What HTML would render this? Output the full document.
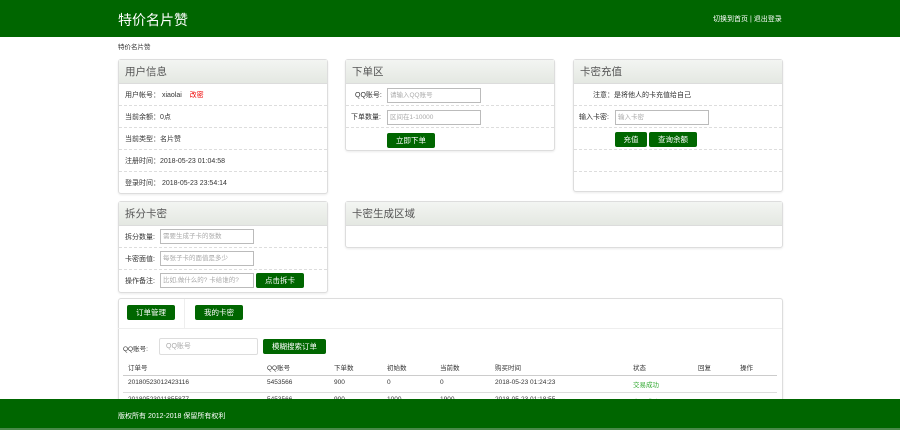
<!DOCTYPE html><html><head><meta charset="utf-8"><style>
*{box-sizing:border-box;margin:0;padding:0}
body{width:900px;height:430px;overflow:hidden;background:#fff;font-family:"Liberation Sans","Noto Sans CJK SC",sans-serif;font-size:7px;color:#333;position:relative}
.a{position:absolute}
.hd{left:0;top:0;width:900px;height:37px;background:#006600}
.p{position:absolute;border:1px solid #ddd;border-radius:3px;box-shadow:0 1px 2px rgba(0,0,0,.08);background:#fff}
.ph{height:24px;background:linear-gradient(#f3f5f2,#e4e8e2);border-bottom:1px solid #dcdcdc;font-size:10.5px;color:#555;padding:6px 6px;line-height:12px}
.r{height:22px;border-bottom:1px dashed #ddd;line-height:23px;padding-left:6px;position:relative;white-space:nowrap}
.in{position:absolute;height:15px;border:1px solid #bbb;color:#aaa;font-size:6.5px;line-height:13px;padding-left:2px;background:#fff}
.b{position:absolute;background:#006600;color:#fff;border-radius:2px;text-align:center;font-size:7.5px;line-height:15px;height:15px}
.t{position:absolute;font-size:6.5px}
</style></head><body>
<div class="a hd"></div>
<div class="a" style="left:118px;top:10px;color:#fff;font-size:14px;line-height:20px">特价名片赞</div>
<div class="a" style="left:713px;top:14px;color:#fff;font-size:7px">切换到首页 | 退出登录</div>
<div class="a" style="left:118px;top:41px;font-size:6.5px">特价名片赞</div>

<div class="p" style="left:118px;top:59px;width:210px;height:135px">
<div class="ph">用户信息</div>
<div class="r">用户帐号：&nbsp;xiaolai&nbsp;&nbsp;&nbsp;&nbsp;<span style="color:#e00">改密</span></div>
<div class="r">当前余额：0点</div>
<div class="r">当前类型：名片赞</div>
<div class="r">注册时间：2018-05-23 01:04:58</div>
<div class="r" style="border:0">登录时间：&nbsp;2018-05-23 23:54:14</div>
</div>

<div class="p" style="left:345px;top:59px;width:210px;height:92px">
<div class="ph">下单区</div>
<div class="r" style="padding-left:9px">QQ账号:<div class="in" style="left:41px;top:4px;width:94px">请输入QQ账号</div></div>
<div class="r" style="padding-left:5px">下单数量:<div class="in" style="left:41px;top:4px;width:94px">区间在1-10000</div></div>
<div class="b" style="left:41px;top:73px;width:48px">立即下单</div>
</div>

<div class="p" style="left:573px;top:59px;width:210px;height:133px">
<div class="ph">卡密充值</div>
<div class="r" style="padding-left:19px">注意：是将他人的卡充值给自己</div>
<div class="r" style="padding-left:5px">输入卡密:<div class="in" style="left:41px;top:4px;width:94px">输入卡密</div></div>
<div class="r"><div class="b" style="left:41px;top:4px;width:32px">充值</div><div class="b" style="left:75px;top:4px;width:48px">查询余额</div></div>
<div class="r"></div>
</div>

<div class="p" style="left:118px;top:201px;width:210px;height:92px">
<div class="ph">拆分卡密</div>
<div class="r">拆分数量:<div class="in" style="left:41px;top:3px;width:94px">需要生成子卡的张数</div></div>
<div class="r">卡密面值:<div class="in" style="left:41px;top:3px;width:94px">每张子卡的面值是多少</div></div>
<div class="r" style="border:0">操作备注:<div class="in" style="left:41px;top:3px;width:94px">比如,做什么的? 卡给谁的?</div><div class="b" style="left:137px;top:3px;width:48px">点击拆卡</div></div>
</div>

<div class="p" style="left:345px;top:201px;width:438px;height:47px">
<div class="ph">卡密生成区域</div>
</div>

<div class="p" style="left:118px;top:298px;width:665px;height:110px;border-bottom:0"></div>
<div class="a" style="left:118px;top:328px;width:664px;border-top:1px solid #eee"></div>
<div class="a" style="left:184px;top:299px;width:1px;height:29px;background:#eee"></div>
<div class="b" style="left:127px;top:305px;width:48px">订单管理</div>
<div class="b" style="left:195px;top:305px;width:48px">我的卡密</div>
<div class="t" style="left:123px;top:343px">QQ账号:</div>
<div class="in" style="left:159px;top:338px;width:99px;height:17px;border-color:#ddd;border-radius:2px;font-size:7px;line-height:15px;padding-left:6px">QQ账号</div>
<div class="b" style="left:263px;top:339px;width:63px">模糊搜索订单</div>
<div class="t" style="left:128px;top:362px">订单号</div><div class="t" style="left:267px;top:362px">QQ账号</div><div class="t" style="left:334px;top:362px">下单数</div><div class="t" style="left:387px;top:362px">初始数</div><div class="t" style="left:440px;top:362px">当前数</div><div class="t" style="left:495px;top:362px">购买时间</div><div class="t" style="left:633px;top:362px">状态</div><div class="t" style="left:698px;top:362px">回复</div><div class="t" style="left:740px;top:362px">操作</div>
<div class="a" style="left:123px;top:375px;width:654px;border-top:1px solid #ccc"></div>
<div class="t" style="left:128px;top:379px">20180523012423116</div><div class="t" style="left:267px;top:379px">5453566</div><div class="t" style="left:334px;top:379px">900</div><div class="t" style="left:387px;top:379px">0</div><div class="t" style="left:440px;top:379px">0</div><div class="t" style="left:495px;top:379px">2018-05-23 01:24:23</div><div class="t" style="left:633px;top:379px;color:#3a3">交易成功</div>
<div class="a" style="left:123px;top:392px;width:654px;border-top:1px solid #ddd"></div>
<div class="t" style="left:128px;top:396px">20180523011855877</div><div class="t" style="left:267px;top:396px">5453566</div><div class="t" style="left:334px;top:396px">900</div><div class="t" style="left:387px;top:396px">1000</div><div class="t" style="left:440px;top:396px">1900</div><div class="t" style="left:495px;top:396px">2018-05-23 01:18:55</div><div class="t" style="left:633px;top:396px;color:#3a3">交易成功</div>
<div class="a" style="left:0;top:399px;width:900px;height:31px;background:#006600;border-bottom:2px solid #4a8a4a"></div>
<div class="a" style="left:118px;top:411px;color:#fff;font-size:7px">版权所有 2012-2018 保留所有权利</div>
</body></html>
